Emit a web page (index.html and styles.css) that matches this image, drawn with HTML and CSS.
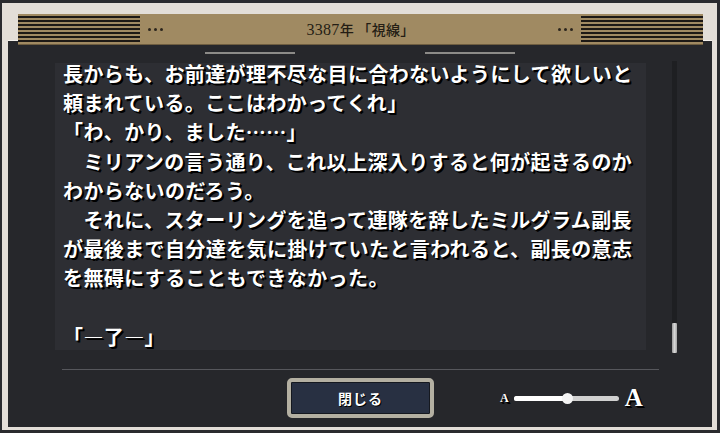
FILE: index.html
```html
<!DOCTYPE html>
<html lang="ja">
<head>
<meta charset="utf-8">
<title>3387年 「視線」</title>
<link rel="stylesheet" href="styles.css">
</head>
<body>
<div class="frame">
  <header class="header">
    <div class="stripes"></div>
    <div class="dots"><i></i><i></i><i></i></div>
    <div class="title"><span class="num">3387</span>年 「視線」</div>
    <div class="dots"><i></i><i></i><i></i></div>
    <div class="stripes"></div>
  </header>
  <main class="panel">
    <div class="ornaments"><span></span><span></span></div>
    <div class="reader">
      <div class="textbox">
        <div class="text">
          <div class="line">長からも、お前達が理不尽な目に合わないようにして欲しいと</div>
          <div class="line">頼まれている。ここはわかってくれ」</div>
          <div class="line">「わ、かり、ました……」</div>
          <div class="line">　ミリアンの言う通り、これ以上深入りすると何が起きるのか</div>
          <div class="line">わからないのだろう。</div>
          <div class="line">　それに、スターリングを追って連隊を辞したミルグラム副長</div>
          <div class="line">が最後まで自分達を気に掛けていたと言われると、副長の意志</div>
          <div class="line">を無碍にすることもできなかった。</div>
          <div class="line">&nbsp;</div>
          <div class="line">「―了―」</div>
        </div>
      </div>
      <div class="scrolltrack"><div class="thumb"></div></div>
    </div>
    <div class="divider"></div>
    <div class="controls">
      <button class="close">閉じる</button>
      <div class="fontsize">
        <span class="a-small">A</span>
        <div class="track"><div class="fill"></div><div class="knob"></div></div>
        <span class="a-big">A</span>
      </div>
    </div>
  </main>
</div>
</body>
</html>
```

FILE: styles.css
```css
html, body {
  margin: 0;
  padding: 0;
}
body {
  background: #2a2b2f;
  width: 720px;
  height: 433px;
  overflow: hidden;
  font-family: "Noto Sans CJK JP", "Noto Sans", sans-serif;
}
.frame {
  margin: 3px 3px 3px 2px;
  height: 427px;
  background: #e3ded8;
  padding-top: 11px;
  box-sizing: border-box;
}
.header {
  position: relative;
  z-index: 1;
  margin: 0 14px -4px 16px;
  height: 30px;
  background: #a08a62;
  box-shadow: 0 1px 0 #6e5d40;
  display: flex;
  align-items: center;
}
.stripes {
  width: 122px;
  height: 30px;
  background: repeating-linear-gradient(to bottom, #a08a62 0, #a08a62 2px, #1d1915 2px, #1d1915 4px);
}
.dots {
  display: flex;
  gap: 3px;
  margin: 0 8px;
}
.dots i {
  width: 3px;
  height: 3px;
  border-radius: 50%;
  background: #2b251d;
}
.title {
  flex: 1;
  text-align: center;
  font-size: 14px;
  color: #241d14;
  font-weight: 500;
  letter-spacing: 0.3px;
}
.title .num {
  font-family: "Liberation Serif", serif;
  font-size: 16px;
}
.panel {
  margin: 0 5px 0 6px;
  height: 387px;
  background: #26272b;
  border-top: 1px solid #f4f1ec;
  box-sizing: border-box;
}
.ornaments {
  display: flex;
  justify-content: center;
  gap: 130px;
  margin-top: 11px;
}
.ornaments span {
  width: 90px;
  height: 2px;
  background: #8c8b88;
}
.reader {
  display: flex;
  margin-top: 7px;
  padding-left: 47px;
}
.textbox {
  width: 591px;
  height: 287px;
  margin-top: 2px;
  background: #2d2e33;
}
.text {
  padding-left: 8px;
  font-size: 20px;
  font-weight: 700;
  color: #ffffff;
  letter-spacing: 0.4px;
  text-shadow: 2px 2px 0 #000, 1px 1px 1px #000;
  white-space: nowrap;
}
.line {
  height: 21px;
  line-height: 21px;
  margin-bottom: 8.2px;
}
.scrolltrack {
  margin-left: 26px;
  width: 5px;
  height: 292px;
  background: #1e1f22;
  display: flex;
  flex-direction: column;
  justify-content: flex-end;
}
.thumb {
  height: 30px;
  background: linear-gradient(to right, #9a9a9a, #d6d6d6 50%, #a5a5a5);
  border-radius: 1px;
}
.divider {
  margin: 16px 0 0 54px;
  width: 597px;
  height: 1px;
  background: #56575c;
}
.controls {
  display: flex;
  align-items: center;
  margin-top: 8px;
  padding-left: 279px;
}
.close {
  width: 147px;
  height: 40px;
  border: 4px solid #b4b0a2;
  border-radius: 5px;
  background: #283042;
  box-shadow: inset 0 0 0 1px #15181f;
  color: #fff;
  font-family: "Noto Sans CJK JP", sans-serif;
  font-size: 14px;
  font-weight: 700;
  letter-spacing: 1px;
  text-shadow: 1px 1px 0 #000;
  padding: 0;
}
.fontsize {
  display: flex;
  align-items: center;
  margin-left: 66px;
}
.a-small, .a-big {
  font-family: "Liberation Serif", serif;
  font-weight: 700;
  color: #fff;
  text-shadow: 1px 1px 0 #000, 2px 2px 0 #000;
}
.a-small {
  font-size: 12px;
}
.a-big {
  font-size: 25px;
  margin-left: 6px;
}
.track {
  position: relative;
  margin-left: 5px;
  width: 105px;
  height: 5px;
  border-radius: 3px;
  background: #d0d0d0;
}
.fill {
  width: 54px;
  height: 5px;
  border-radius: 3px;
  background: #ffffff;
}
.knob {
  position: absolute;
  left: 48px;
  top: -3px;
  width: 11px;
  height: 11px;
  border-radius: 50%;
  background: #f4f4f4;
}
```
